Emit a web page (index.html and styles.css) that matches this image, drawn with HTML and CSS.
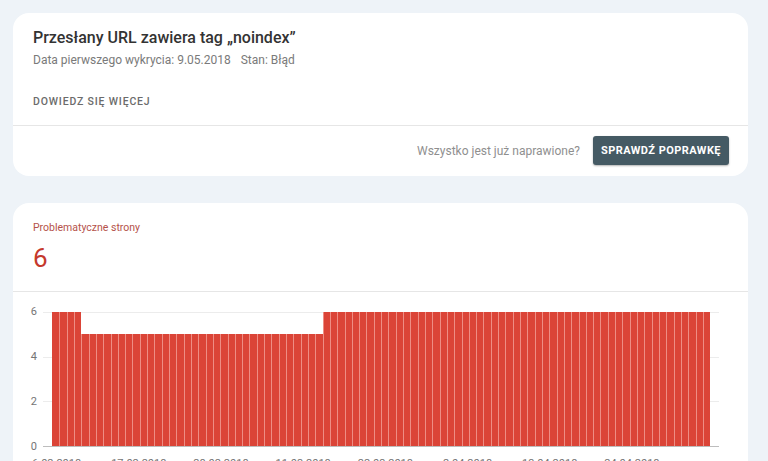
FILE: index.html
```html
<!DOCTYPE html>
<html lang="pl">
<head>
<meta charset="utf-8">
<title>Przesłany URL zawiera tag noindex</title>
<link rel="stylesheet" href="styles.css">
</head>
<body>
<div class="page">
  <section class="card issue">
    <div class="issue-head">
      <h1 class="title">Przesłany URL zawiera tag „noindex”</h1>
      <div class="meta"><span>Data pierwszego wykrycia: 9.05.2018</span><span>Stan: Błąd</span></div>
      <a class="learn" href="#">DOWIEDZ SIĘ WIĘCEJ</a>
    </div>
    <div class="issue-foot">
      <span class="fixed-q">Wszystko jest już naprawione?</span>
      <button class="btn">SPRAWDŹ POPRAWKĘ</button>
    </div>
  </section>

  <section class="card chart-card">
    <div class="summary">
      <div class="summary-label">Problematyczne strony</div>
      <div class="summary-value">6</div>
    </div>
    <div class="chart">
      <div class="ylabels"><span>6</span><span>4</span><span>2</span><span>0</span></div>
      <div class="plot-col">
        <div class="plot">
          <div class="bars">
            <i class="bar h6"></i><i class="bar h6"></i><i class="bar h6"></i><i class="bar h6"></i>
            <i class="bar h5"></i><i class="bar h5"></i><i class="bar h5"></i><i class="bar h5"></i><i class="bar h5"></i><i class="bar h5"></i><i class="bar h5"></i><i class="bar h5"></i><i class="bar h5"></i><i class="bar h5"></i>
            <i class="bar h5"></i><i class="bar h5"></i><i class="bar h5"></i><i class="bar h5"></i><i class="bar h5"></i><i class="bar h5"></i><i class="bar h5"></i><i class="bar h5"></i><i class="bar h5"></i><i class="bar h5"></i>
            <i class="bar h5"></i><i class="bar h5"></i><i class="bar h5"></i><i class="bar h5"></i><i class="bar h5"></i><i class="bar h5"></i><i class="bar h5"></i><i class="bar h5"></i><i class="bar h5"></i><i class="bar h5"></i>
            <i class="bar h5"></i><i class="bar h5"></i><i class="bar h5"></i>
            <i class="bar h6"></i><i class="bar h6"></i><i class="bar h6"></i><i class="bar h6"></i><i class="bar h6"></i><i class="bar h6"></i><i class="bar h6"></i><i class="bar h6"></i><i class="bar h6"></i><i class="bar h6"></i>
            <i class="bar h6"></i><i class="bar h6"></i><i class="bar h6"></i><i class="bar h6"></i><i class="bar h6"></i><i class="bar h6"></i><i class="bar h6"></i><i class="bar h6"></i><i class="bar h6"></i><i class="bar h6"></i>
            <i class="bar h6"></i><i class="bar h6"></i><i class="bar h6"></i><i class="bar h6"></i><i class="bar h6"></i><i class="bar h6"></i><i class="bar h6"></i><i class="bar h6"></i><i class="bar h6"></i><i class="bar h6"></i>
            <i class="bar h6"></i><i class="bar h6"></i><i class="bar h6"></i><i class="bar h6"></i><i class="bar h6"></i><i class="bar h6"></i><i class="bar h6"></i><i class="bar h6"></i><i class="bar h6"></i><i class="bar h6"></i>
            <i class="bar h6"></i><i class="bar h6"></i><i class="bar h6"></i><i class="bar h6"></i><i class="bar h6"></i><i class="bar h6"></i><i class="bar h6"></i><i class="bar h6"></i><i class="bar h6"></i><i class="bar h6"></i>
            <i class="bar h6"></i><i class="bar h6"></i><i class="bar h6"></i>
          </div>
        </div>
        <div class="xlabels">
          <span>6.02.2018</span><span>17.02.2018</span><span>28.02.2018</span><span>11.03.2018</span><span>22.03.2018</span><span>2.04.2018</span><span>13.04.2018</span><span>24.04.2018</span>
        </div>
      </div>
    </div>
  </section>
</div>
</body>
</html>
```
FILE: styles.css
```css
* { box-sizing: border-box; }
html, body { margin: 0; padding: 0; }
body {
  background: #eef3f8;
  font-family: Roboto, "Noto Sans", "Liberation Sans", sans-serif;
  color: #202124;
  overflow: hidden;
  height: 461px;
}
.page {
  padding: 13px 20px 0 13px;
  display: flex;
  flex-direction: column;
  gap: 27px;
}
.card {
  background: #fff;
  border-radius: 16px;
  width: 735px;
}
.issue-head {
  padding: 13px 20px 0 20px;
  border-bottom: 1px solid #e6e6e6;
}
.title {
  margin: 0;
  font-size: 16px;
  line-height: 24px;
  font-weight: 500;
  color: #333;
}
.meta {
  margin-top: 1px;
  font-size: 12px;
  line-height: 18px;
  color: #7a7a7a;
  display: flex;
  gap: 10px;
}
.learn {
  display: block;
  margin-top: 25px;
  padding-bottom: 15px;
  font-size: 10.5px;
  line-height: 16px;
  font-weight: 500;
  letter-spacing: 0.83px;
  color: #6b6b6b;
  text-decoration: none;
}
.issue-foot {
  display: flex;
  justify-content: flex-end;
  align-items: center;
  gap: 13px;
  padding: 10px 19px 11px 20px;
}
.fixed-q {
  font-size: 12px;
  color: #8f8f8f;
}
.btn {
  height: 29px;
  padding: 0 8px;
  border: none;
  border-radius: 3px;
  background: #455a64;
  color: #fff;
  font-family: Roboto, "Liberation Sans", sans-serif;
  font-size: 11px;
  font-weight: 700;
  letter-spacing: 0.45px;
  box-shadow: 0 1px 2px rgba(0,0,0,0.3);
}
.chart-card {
  height: 300px;
}
.summary {
  padding: 17px 20px 18px 20px;
  border-bottom: 1px solid #e6e6e6;
}
.summary-label {
  font-size: 10.5px;
  line-height: 16px;
  color: #b5524a;
}
.summary-value {
  margin-top: 7px;
  font-size: 26px;
  line-height: 30px;
  color: #c5392c;
}
.chart {
  display: flex;
  gap: 6px;
  padding: 20px 29px 0 20px;
}
.ylabels {
  width: 4px;
  height: 149px;
  margin-top: -7px;
  display: flex;
  flex-direction: column;
  justify-content: space-between;
  align-items: flex-end;
  font-size: 11px;
  line-height: 14px;
  color: #757575;
}
.plot-col {
  flex: 1;
}
.plot {
  height: 135px;
  border-bottom: 1px solid #bdbdbd;
  background: repeating-linear-gradient(to bottom, #ececec 0, #ececec 1px, transparent 1px, transparent 44.67px);
  padding: 0 9px 0 9px;
}
.bars {
  width: 658px;
  height: 100%;
  display: flex;
  align-items: flex-end;
}
.bar {
  flex: 1;
  display: block;
  background: #db4437;
  border-left: 1px solid #ee8d84;
}
.bar:first-child { border-left-color: #db4437; }
.bar.h6 { height: 134px; }
.bar.h5 { height: 112px; }
.xlabels {
  display: flex;
  margin-left: -27.5px;
  margin-top: 9px;
  font-size: 11px;
  line-height: 16px;
  color: #757575;
}
.xlabels span {
  width: 82.2px;
  flex: none;
  text-align: center;
}
```
